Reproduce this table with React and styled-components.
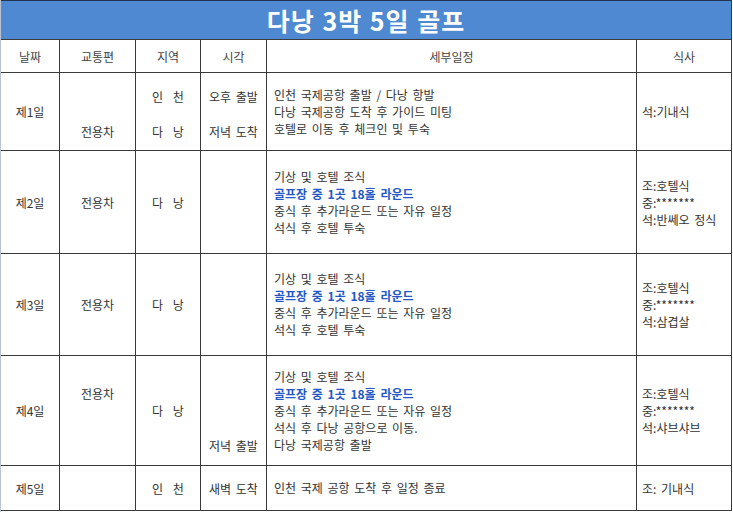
import React from 'react';
import styled, { createGlobalStyle } from 'styled-components';

const GlobalStyle = createGlobalStyle`
    html, body {
        margin: 0;
        padding: 0;
        background: #ffffff;
    }
    body {
        font-family: "Noto Sans CJK KR", "Noto Sans", sans-serif;
        color: #333333;
    }
`;

const Sheet = styled.div`
    width: 733px;
    height: 512px;
    box-sizing: border-box;
    border-left: 1px solid #b9c3cf;
    overflow: hidden;
`;

const TitleBar = styled.div`
    height: 40px;
    box-sizing: border-box;
    background: #4f89d2;
    border-top: 1px solid #22334f;
    border-bottom: 1px solid #3a3a3a;
    border-right: 1px solid #3a3a3a;
    width: 731px;
    display: flex;
    align-items: center;
    justify-content: center;
    color: #ffffff;
    font-size: 25px;
    font-weight: 700;
    letter-spacing: 1px;
    word-spacing: 1px;
    padding-bottom: 1px;
`;

const Grid = styled.div`
    display: grid;
    grid-template-columns: 59px 76px 65px 66px 370px 95px;
    grid-template-rows: 33px 78px 103px 102px 110px 45px;
`;

const Cell = styled.div`
    box-sizing: border-box;
    border-right: 1px solid #3a3a3a;
    border-bottom: 1px solid #3a3a3a;
    display: flex;
    flex-direction: column;
    justify-content: ${p => p.$v || 'center'};
    align-items: ${p => (p.$left ? 'flex-start' : 'center')};
    padding: ${p => p.$pad || '0'};
    font-size: 12px;
    line-height: 17px;
    white-space: nowrap;
    word-spacing: 2px;
    color: ${p => (p.$head ? '#444444' : '#333333')};
`;

const Spaced = styled.span`
    word-spacing: 7px;
`;

const Line = styled.div`
    color: ${p => (p.$blue ? '#2458c8' : 'inherit')};
    font-weight: ${p => (p.$blue ? 700 : 400)};
`;

const headers = ['날짜', '교통편', '지역', '시각', '세부일정', '식사'];

const golf = '골프장 중 1곳 18홀 라운드';

const days = [
    {
        day: '제1일',
        car: { text: '전용차', v: 'flex-end', pad: '0 0 10px' },
        place: { lines: ['인 천', '다 낭'], v: 'space-between', pad: '15px 0 10px' },
        time: { lines: ['오후 출발', '저녁 도착'], v: 'space-between', pad: '15px 0 10px' },
        plan: ['인천 국제공항 출발 / 다낭 항발', '다낭 국제공항 도착 후 가이드 미팅', '호텔로 이동 후 체크인 및 투숙'],
        meal: ['석:기내식'],
    },
    {
        day: '제2일',
        car: { text: '전용차' },
        place: { lines: ['다 낭'] },
        time: { lines: [] },
        plan: ['기상 및 호텔 조식', golf, '중식 후 추가라운드 또는 자유 일정', '석식 후 호텔 투숙'],
        meal: ['조:호텔식', '중:*******', '석:반쎄오 정식'],
    },
    {
        day: '제3일',
        car: { text: '전용차' },
        place: { lines: ['다 낭'] },
        time: { lines: [] },
        plan: ['기상 및 호텔 조식', golf, '중식 후 추가라운드 또는 자유 일정', '석식 후 호텔 투숙'],
        meal: ['조:호텔식', '중:*******', '석:삼겹살'],
    },
    {
        day: '제4일',
        car: { text: '전용차', v: 'flex-start', pad: '29px 0 0' },
        place: { lines: ['다 낭'] },
        time: { lines: ['저녁 출발'], v: 'flex-end', pad: '0 0 11px' },
        plan: ['기상 및 호텔 조식', golf, '중식 후 추가라운드 또는 자유 일정', '석식 후 다낭 공항으로 이동.', '다낭 국제공항 출발'],
        meal: ['조:호텔식', '중:*******', '석:샤브샤브'],
    },
    {
        day: '제5일',
        car: { text: '' },
        place: { lines: ['인 천'] },
        time: { lines: ['새벽 도착'] },
        plan: ['인천 국제 공항 도착 후 일정 종료'],
        meal: ['조: 기내식'],
    },
];

export default function App() {
    return (
        <>
            <GlobalStyle />
            <Sheet>
                <TitleBar>다낭 3박 5일 골프</TitleBar>
                <Grid>
                    {headers.map((h) => (
                        <Cell key={h} $head>{h}</Cell>
                    ))}
                    {days.map((d) => (
                        <React.Fragment key={d.day}>
                            <Cell>{d.day}</Cell>
                            <Cell $v={d.car.v} $pad={d.car.pad}>{d.car.text}</Cell>
                            <Cell $v={d.place.v} $pad={d.place.pad}>
                                {d.place.lines.map((l) => (
                                    <Spaced key={l}>{l}</Spaced>
                                ))}
                            </Cell>
                            <Cell $v={d.time.v} $pad={d.time.pad}>
                                {d.time.lines.map((l) => (
                                    <Line key={l}>{l}</Line>
                                ))}
                            </Cell>
                            <Cell $left $pad="0 0 1px 7px">
                                {d.plan.map((l, i) => (
                                    <Line key={i} $blue={l === golf}>{l}</Line>
                                ))}
                            </Cell>
                            <Cell $left $pad="0 0 0 5px">
                                {d.meal.map((l) => (
                                    <Line key={l}>{l}</Line>
                                ))}
                            </Cell>
                        </React.Fragment>
                    ))}
                </Grid>
            </Sheet>
        </>
    );
}
